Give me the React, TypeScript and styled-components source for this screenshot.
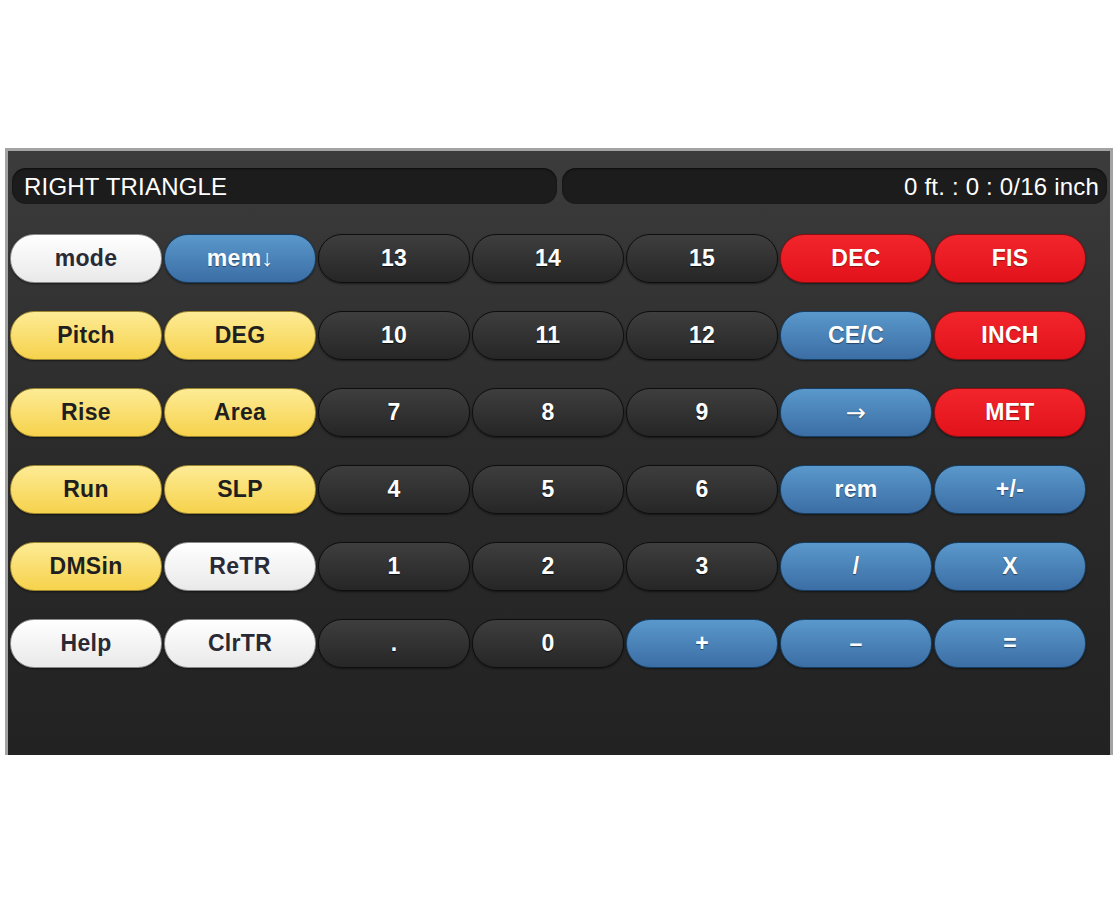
import React from "react";
import styled, { createGlobalStyle, css } from "styled-components";

type Tone = "white" | "yellow" | "blue" | "red" | "dark";

const keys: [string, Tone][][] = [
  [["mode", "white"], ["mem↓", "blue"], ["13", "dark"], ["14", "dark"], ["15", "dark"], ["DEC", "red"], ["FIS", "red"]],
  [["Pitch", "yellow"], ["DEG", "yellow"], ["10", "dark"], ["11", "dark"], ["12", "dark"], ["CE/C", "blue"], ["INCH", "red"]],
  [["Rise", "yellow"], ["Area", "yellow"], ["7", "dark"], ["8", "dark"], ["9", "dark"], ["→", "blue"], ["MET", "red"]],
  [["Run", "yellow"], ["SLP", "yellow"], ["4", "dark"], ["5", "dark"], ["6", "dark"], ["rem", "blue"], ["+/-", "blue"]],
  [["DMSin", "yellow"], ["ReTR", "white"], ["1", "dark"], ["2", "dark"], ["3", "dark"], ["/", "blue"], ["X", "blue"]],
  [["Help", "white"], ["ClrTR", "white"], [".", "dark"], ["0", "dark"], ["+", "blue"], ["–", "blue"], ["=", "blue"]],
];

export default function App() {
  return (
    <>
      <GlobalStyle />
      <Panel>
        <DisplayRow>
          <Display>RIGHT TRIANGLE</Display>
          <Display $right>0 ft. : 0 : 0/16 inch</Display>
        </DisplayRow>
        <Keypad>
          {keys.flat().map(([label, tone], i) => (
            <Key key={i} $tone={tone}>
              {label === "→" ? <Arrow>{label}</Arrow> : label}
            </Key>
          ))}
        </Keypad>
      </Panel>
    </>
  );
}

const GlobalStyle = createGlobalStyle`
  body {
    margin: 0;
    background: #ffffff;
    font-family: "Liberation Sans", Arial, sans-serif;
  }
`;

const Panel = styled.div`
  margin: 148px 0 0 5px;
  width: 1108px;
  height: 607px;
  box-sizing: border-box;
  border: 3px solid #a3a3a3;
  border-bottom: none;
  background: linear-gradient(to bottom, #3c3c3c 0%, #2c2c2c 45%, #222222 100%);
  padding: 17px 0 0 2px;
`;

const DisplayRow = styled.div`
  display: flex;
  gap: 5px;
  padding-left: 2px;
  width: 1095px;
`;

const Display = styled.div<{ $right?: boolean }>`
  flex: 1;
  height: 36px;
  box-sizing: border-box;
  border-radius: 14px;
  background: #1c1c1c;
  box-shadow: inset 0 1px 2px rgba(0, 0, 0, 0.6);
  color: #ffffff;
  font-size: 24px;
  letter-spacing: 0.2px;
  line-height: 37px;
  padding: 0 8px 0 12px;
  text-align: ${p => (p.$right ? "right" : "left")};
  white-space: nowrap;
`;

const Keypad = styled.div`
  display: grid;
  grid-template-columns: repeat(7, 152px);
  grid-auto-rows: 49px;
  column-gap: 2px;
  row-gap: 28px;
  margin-top: 30px;
`;

const tones: Record<Tone, ReturnType<typeof css>> = {
  white: css`
    background: linear-gradient(to bottom, #ffffff, #e9e9e9);
    border-color: #8a8a8a;
    color: #2a2a36;
  `,
  yellow: css`
    background: linear-gradient(to bottom, #fdeb95, #f6d24c);
    border-color: #9c8530;
    color: #1f1f1f;
  `,
  blue: css`
    background: linear-gradient(to bottom, #5a98cb, #3b6ea4);
    border-color: #173f63;
    color: #ffffff;
    text-shadow: 0 1px 1px rgba(0, 0, 0, 0.45);
  `,
  red: css`
    background: linear-gradient(to bottom, #f2252c, #e2121b);
    border-color: #8a0f14;
    color: #ffffff;
    text-shadow: 0 1px 1px rgba(0, 0, 0, 0.35);
  `,
  dark: css`
    background: linear-gradient(to bottom, #3e3e3e, #262626);
    border-color: #0e0e0e;
    color: #ffffff;
    text-shadow: 0 1px 1px rgba(0, 0, 0, 0.7);
  `,
};

const Key = styled.button<{ $tone: Tone }>`
  height: 49px;
  box-sizing: border-box;
  border: 1px solid;
  border-radius: 24px;
  font-family: "Liberation Sans", Arial, sans-serif;
  font-weight: bold;
  font-size: 23px;
  letter-spacing: 0.3px;
  padding: 0;
  cursor: pointer;
  box-shadow: 0 1px 2px rgba(0, 0, 0, 0.5);
  ${p => tones[p.$tone]}
`;

const Arrow = styled.span`
  font-family: "DejaVu Sans", sans-serif;
  font-weight: normal;
  font-size: 24px;
`;
